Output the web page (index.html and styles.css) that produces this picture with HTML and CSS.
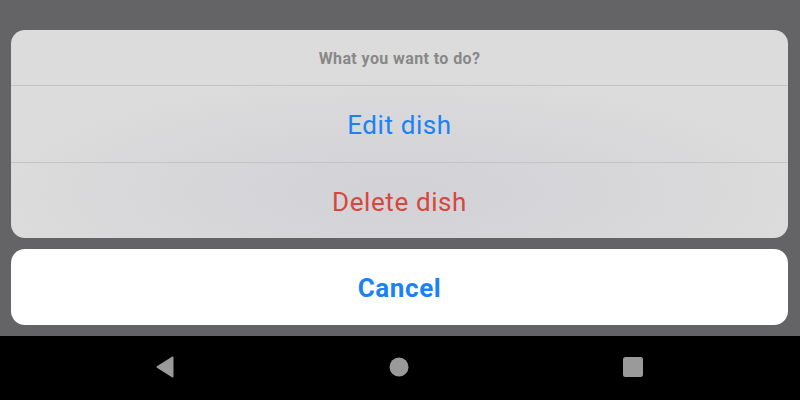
FILE: index.html
```html
<!DOCTYPE html>
<html>
<head>
<meta charset="utf-8">
<link rel="stylesheet" href="styles.css">
</head>
<body>
<div class="screen">
  <div class="sheet">
    <div class="group">
      <div class="title">What you want to do?</div>
      <div class="action blue">Edit dish</div>
      <div class="action red">Delete dish</div>
    </div>
    <div class="cancel">Cancel</div>
  </div>
  <div class="navbar">
    <svg class="nav-icon" width="20" height="22" viewBox="0 0 20 22"><path d="M17.5 1.5 L17.5 20.5 L2.5 11 Z" fill="#9a9a9a" stroke="#9a9a9a" stroke-width="2" stroke-linejoin="round"/></svg>
    <svg class="nav-icon" width="20" height="20" viewBox="0 0 20 20"><circle cx="10" cy="10" r="9.5" fill="#9a9a9a"/></svg>
    <svg class="nav-icon" width="20" height="20" viewBox="0 0 20 20"><rect x="0" y="0" width="20" height="20" rx="2.5" fill="#9a9a9a"/></svg>
  </div>
</div>
</body>
</html>
```

FILE: styles.css
```css
html, body {
  margin: 0;
  padding: 0;
}
body {
  width: 800px;
  height: 400px;
  overflow: hidden;
  background: #646466;
  font-family: Roboto, "Liberation Sans", sans-serif;
}
.screen {
  display: flex;
  flex-direction: column;
  height: 400px;
}
.sheet {
  flex: 1;
  display: flex;
  flex-direction: column;
  gap: 11px;
  padding: 30px 12px 0 11px;
}
.group {
  height: 208px;
  border-radius: 14px;
  overflow: hidden;
  display: flex;
  flex-direction: column;
  background: radial-gradient(ellipse 420px 120px at 50% 78%, #d2d2d7 0%, #d6d6d9 45%, #dcdcdc 100%);
}
.title {
  height: 56px;
  flex-shrink: 0;
  display: flex;
  align-items: center;
  justify-content: center;
  padding-top: 2px;
  font-size: 16px;
  font-weight: 700;
  letter-spacing: 0.4px;
  color: #888888;
  border-bottom: 1px solid #c4c4c6;
  box-sizing: border-box;
}
.action {
  height: 77px;
  flex-shrink: 0;
  display: flex;
  align-items: center;
  justify-content: center;
  padding-top: 2px;
  font-size: 26px;
  letter-spacing: 0.6px;
  box-sizing: border-box;
}
.action.blue {
  color: #1a82f7;
  border-bottom: 1px solid #c4c4c6;
}
.action.red {
  color: #d6473d;
  height: 75px;
}
.cancel {
  height: 76px;
  border-radius: 14px;
  background: #ffffff;
  display: flex;
  align-items: center;
  justify-content: center;
  padding-top: 2px;
  box-sizing: border-box;
  font-size: 26px;
  font-weight: 700;
  color: #1a82f7;
  letter-spacing: 0.6px;
}
.navbar {
  height: 64px;
  background: #000000;
  display: flex;
  align-items: center;
  justify-content: space-between;
  padding: 0 157px 2px 155px;
  box-sizing: border-box;
}
.nav-icon {
  display: block;
}
```
